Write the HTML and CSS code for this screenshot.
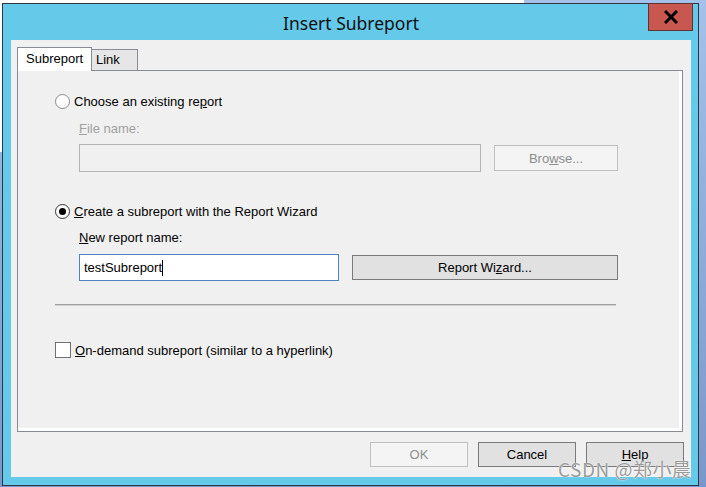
FILE: index.html
```html
<!DOCTYPE html>
<html lang="en">
<head>
    <meta charset="UTF-8">
    <meta name="viewport" content="width=device-width, initial-scale=1.0">
    <title>Insert Subreport</title>
    <link rel="stylesheet" href="styles.css">
</head>
<body>
    <div class="window">
        <div class="titlebar">
            <span class="title">Insert Subreport</span>
            <button class="close" title="Close">
                <svg width="14" height="14" viewBox="0 0 14 14">
                    <path d="M1 1 L13 13 M13 1 L1 13" stroke="#000" stroke-width="3" fill="none"/>
                </svg>
            </button>
        </div>
        <div class="client">
            <div class="tabs">
                <div class="tab active">Subreport</div>
                <div class="tab">Link</div>
            </div>
            <div class="panel">
                <div class="option first">
                    <span class="radio"></span>
                    <span>Choose an existing re<u>p</u>ort</span>
                </div>
                <div class="field-label disabled"><u>F</u>ile name:</div>
                <div class="field-row file-row">
                    <div class="textbox disabled"></div>
                    <button class="btn browse" disabled>Bro<u>w</u>se...</button>
                </div>
                <div class="option second">
                    <span class="radio checked"></span>
                    <span><u>C</u>reate a subreport with the Report Wizard</span>
                </div>
                <div class="field-label name-label"><u>N</u>ew report name:</div>
                <div class="field-row name-row">
                    <div class="textbox focused">testSubreport<span class="caret"></span></div>
                    <button class="btn wizard">Report Wi<u>z</u>ard...</button>
                </div>
                <div class="separator"></div>
                <div class="option ondemand">
                    <span class="checkbox"></span>
                    <span><u>O</u>n-demand subreport (similar to a hyperlink)</span>
                </div>
            </div>
            <div class="actions">
                <button class="btn" disabled>OK</button>
                <button class="btn">Cancel</button>
                <button class="btn"><u>H</u>elp</button>
            </div>
        </div>
    </div>
    <div class="watermark">CSDN @郑小晨</div>
</body>
</html>
```

FILE: styles.css
```css
html, body {
    margin: 0;
    padding: 0;
    height: 100%;
    overflow: hidden;
}

body {
    font-family: "Liberation Sans", Arial, sans-serif;
    font-size: 13px;
    color: #000;
    background:
        linear-gradient(to right, #fff 524px, transparent 524px) left top / 100% 3px no-repeat,
        linear-gradient(#fff, #fff) left top / 2px 152px no-repeat,
        linear-gradient(#a4c1ea, #7a97cb);
    position: relative;
}

.window {
    box-sizing: border-box;
    width: 697px;
    height: 483px;
    margin: 3px 0 0 2px;
    border: 1px solid #2d3642;
    background-color: #65c9ea;
    padding: 0 7px 8px 8px;
    display: flex;
    flex-direction: column;
}

.titlebar {
    position: relative;
    height: 36px;
    display: flex;
    align-items: center;
    justify-content: center;
}

.title {
    font-family: "Noto Sans", sans-serif;
    font-size: 17.5px;
    color: #111;
    margin-top: 1px;
}

.close {
    position: absolute;
    top: -1px;
    right: -2px;
    width: 45px;
    height: 28px;
    box-sizing: border-box;
    background-color: #c7574f;
    border: 1px solid #5f3331;
    padding: 0;
    display: flex;
    align-items: center;
    justify-content: center;
}

.client {
    flex: 1;
    background-color: #f0f0f0;
    padding: 7px 8px 0 6px;
    display: flex;
    flex-direction: column;
}

.tabs {
    height: 23px;
    display: flex;
    align-items: flex-end;
}

.tab {
    box-sizing: border-box;
    border: 1px solid #898c95;
    border-bottom: none;
    padding-left: 8px;
}

.tab.active {
    position: relative;
    z-index: 1;
    width: 75px;
    height: 24px;
    margin-bottom: -1px;
    background-color: #fff;
    line-height: 22px;
}

.tab:not(.active) {
    width: 46px;
    height: 21px;
    border-left: none;
    background-color: #e6e6e6;
    padding-left: 4px;
    line-height: 20px;
}

.panel {
    box-sizing: border-box;
    height: 362px;
    border: 1px solid #898c95;
    box-shadow: inset -3px -3px 0 #fff;
    padding-left: 37px;
    display: flex;
    flex-direction: column;
    align-items: flex-start;
}

.option {
    height: 16px;
    display: flex;
    align-items: center;
    gap: 4px;
}

.option.first {
    margin-top: 22px;
}

.option.second {
    margin-top: 31px;
}

.option.ondemand {
    margin-top: 36px;
}

.radio {
    box-sizing: border-box;
    width: 15px;
    height: 15px;
    border: 1px solid #8a8a8a;
    border-radius: 50%;
    background-color: #fff;
    display: flex;
    align-items: center;
    justify-content: center;
}

.radio.checked {
    border-color: #333;
}

.radio.checked::after {
    content: "";
    width: 7px;
    height: 7px;
    border-radius: 50%;
    background-color: #000;
}

.checkbox {
    box-sizing: border-box;
    width: 16px;
    height: 16px;
    border: 1px solid #707070;
    background-color: #fff;
}

.field-label {
    margin-left: 24px;
    height: 16px;
    line-height: 16px;
    margin-top: 12px;
}

.field-label.name-label {
    margin-top: 11px;
}

.disabled {
    color: #a0a0a0;
}

.field-row {
    margin-left: 24px;
    display: flex;
    align-items: center;
    gap: 13px;
}

.file-row {
    margin-top: 7px;
    height: 28px;
}

.name-row {
    margin-top: 8px;
    height: 27px;
}

.textbox {
    box-sizing: border-box;
    padding-left: 4px;
    display: flex;
    align-items: center;
}

.textbox.disabled {
    width: 402px;
    height: 28px;
    border: 1px solid #b4b4b4;
    background-color: #f0f0f0;
}

.textbox.focused {
    width: 260px;
    height: 27px;
    border: 1px solid #4f84c4;
    background-color: #fff;
}

.caret {
    display: inline-block;
    width: 1px;
    height: 16px;
    background-color: #000;
}

.btn {
    box-sizing: border-box;
    font-family: inherit;
    font-size: 13px;
    color: #000;
    background-color: #e1e1e1;
    border: 1px solid #7a7a7a;
    padding: 0;
    width: 98px;
    height: 25px;
}

.btn:disabled {
    color: #8d8d8d;
    background-color: #f4f4f4;
    border-color: #bfbfbf;
}

.btn.browse {
    width: 124px;
    height: 26px;
}

.btn.wizard {
    width: 266px;
    height: 25px;
}

.separator {
    margin-top: 23px;
    width: 561px;
    height: 1px;
    border-bottom: 1px solid #d2d2d2;
    background-color: #a0a0a0;
}

.actions {
    margin-top: 10px;
    margin-right: -1px;
    display: flex;
    justify-content: flex-end;
    gap: 10px;
}

.watermark {
    position: absolute;
    left: 558px;
    top: 455px;
    font-family: "Noto Sans CJK SC", sans-serif;
    font-size: 19px;
    color: rgba(128, 128, 128, 0.8);
    text-shadow: 0 0 1px #fff, 0 0 1px #fff;
    letter-spacing: 0.5px;
}
```
